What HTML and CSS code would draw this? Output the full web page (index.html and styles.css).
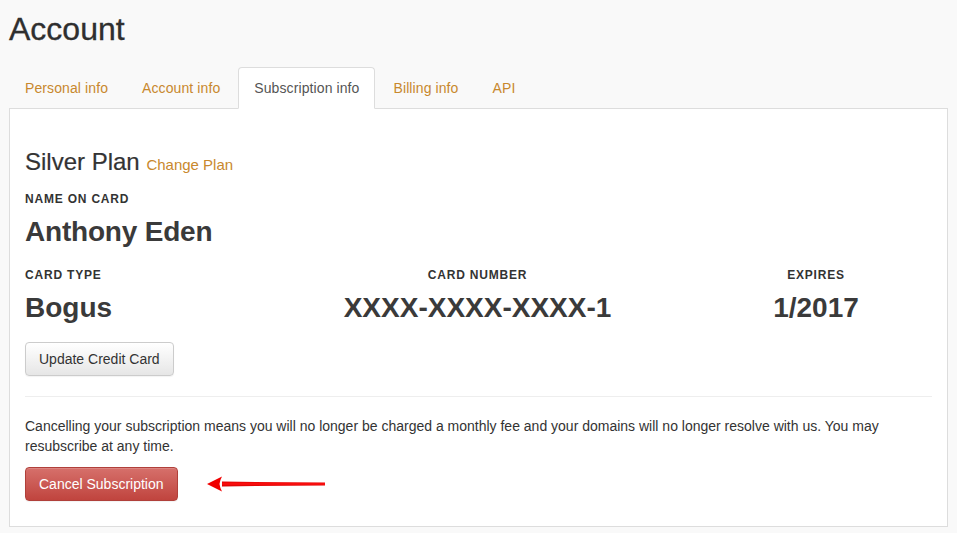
FILE: index.html
```html
<!DOCTYPE html>
<html>
<head>
<meta charset="utf-8">
<link rel="stylesheet" href="styles.css">
</head>
<body>
<div class="page">
  <h1 class="title">Account</h1>
  <ul class="tabs">
    <li class="tab"><a href="#">Personal info</a></li>
    <li class="tab"><a href="#">Account info</a></li>
    <li class="tab active"><a href="#">Subscription info</a></li>
    <li class="tab"><a href="#">Billing info</a></li>
    <li class="tab"><a href="#">API</a></li>
  </ul>
  <div class="panel">
    <h2 class="plan">Silver Plan <a href="#" class="plan-link">Change Plan</a></h2>
    <div class="label">Name on card</div>
    <div class="value name">Anthony Eden</div>
    <div class="card-row">
      <div class="col">
        <div class="label">Card type</div>
        <div class="value">Bogus</div>
      </div>
      <div class="col center">
        <div class="label">Card number</div>
        <div class="value">XXXX-XXXX-XXXX-1</div>
      </div>
      <div class="col center">
        <div class="label">Expires</div>
        <div class="value">1/2017</div>
      </div>
    </div>
    <button class="btn">Update Credit Card</button>
    <hr class="divider">
    <p class="note">Cancelling your subscription means you will no longer be charged a monthly fee and your domains will no longer resolve with us. You may resubscribe at any time.</p>
    <div class="cancel-row">
      <button class="btn btn-danger">Cancel Subscription</button>
      <svg class="arrow" width="120" height="18" viewBox="0 0 120 18">
        <defs>
          <linearGradient id="sh" x1="0" y1="0" x2="0" y2="1">
            <stop offset="0" stop-color="#e00000"/>
            <stop offset="0.5" stop-color="#ff1010"/>
            <stop offset="1" stop-color="#d00000"/>
          </linearGradient>
        </defs>
        <path d="M15 6.6 L118 7.6 L118 10.4 L15 11.4 Z" fill="url(#sh)"/>
        <path d="M0 9 L15 1.5 Q13 5 12.5 9 Q13 13 15 16.5 Z" fill="#f00000"/>
      </svg>
    </div>
  </div>
</div>
</body>
</html>
```

FILE: styles.css
```css
html, body {
  margin: 0;
  padding: 0;
  background: #f9f9f9;
  font-family: "Liberation Sans", Arial, sans-serif;
  color: #333;
}

.page {
  padding: 12px 9px 0 9px;
}

.title {
  font-size: 32px;
  font-weight: normal;
  line-height: 35px;
  margin: 0 0 20px 0;
  color: #2f2f2f;
  -webkit-text-stroke: 0.3px #2f2f2f;
}

.tabs {
  list-style: none;
  margin: 0;
  padding: 0;
  display: flex;
  position: relative;
  z-index: 1;
  margin-bottom: -1px;
}

.tab {
  margin-right: 2px;
}

.tab a {
  display: block;
  padding: 10px 15px;
  line-height: 20px;
  font-size: 14px;
  letter-spacing: 0.1px;
  color: #c8882e;
  text-decoration: none;
  border: 1px solid transparent;
  border-radius: 4px 4px 0 0;
}

.tab.active a {
  background: #fff;
  color: #555;
  border-color: #ddd;
  border-bottom-color: #fff;
}

.panel {
  background: #fff;
  border: 1px solid #ddd;
  width: 907px;
  padding: 40px 15px 25px 15px;
}

.plan {
  font-size: 24px;
  font-weight: normal;
  line-height: 26px;
  margin: 0 0 13px 0;
  color: #333;
  -webkit-text-stroke: 0.2px #333;
}

.plan-link {
  font-size: 15px;
  color: #c8882e;
  text-decoration: none;
  -webkit-text-stroke: 0;
}

.label {
  font-size: 12px;
  font-weight: bold;
  line-height: 17px;
  letter-spacing: 0.8px;
  text-transform: uppercase;
  color: #333;
  margin-bottom: 8px;
}

.value {
  font-size: 28px;
  font-weight: bold;
  line-height: 31px;
  color: #3a3a3a;
}

.name {
  margin-bottom: 20px;
  letter-spacing: -0.2px;
}

.card-row {
  display: grid;
  grid-template-columns: 230px 445px 232px;
  margin-bottom: 19px;
}

.col.center {
  text-align: center;
}

.btn {
  font-family: "Liberation Sans", Arial, sans-serif;
  font-size: 14px;
  line-height: 20px;
  padding: 6px 13px;
  border: 1px solid #ccc;
  border-radius: 4px;
  color: #333;
  background: linear-gradient(#fff, #e6e6e6);
  box-shadow: inset 0 1px 0 rgba(255,255,255,.15), 0 1px 1px rgba(0,0,0,.05);
  cursor: pointer;
  display: block;
}

.divider {
  border: 0;
  border-top: 1px solid #eee;
  margin: 20px 0 19px 0;
}

.note {
  font-size: 14px;
  line-height: 20px;
  margin: 0 0 11px 0;
  color: #333;
}

.cancel-row {
  display: flex;
  align-items: center;
  gap: 29px;
}

.btn-danger {
  color: #fff;
  border-color: #b0403a;
  background: linear-gradient(#d6706b, #c0443e);
  padding: 6px 13px;
}

.arrow {
  display: block;
}
```
